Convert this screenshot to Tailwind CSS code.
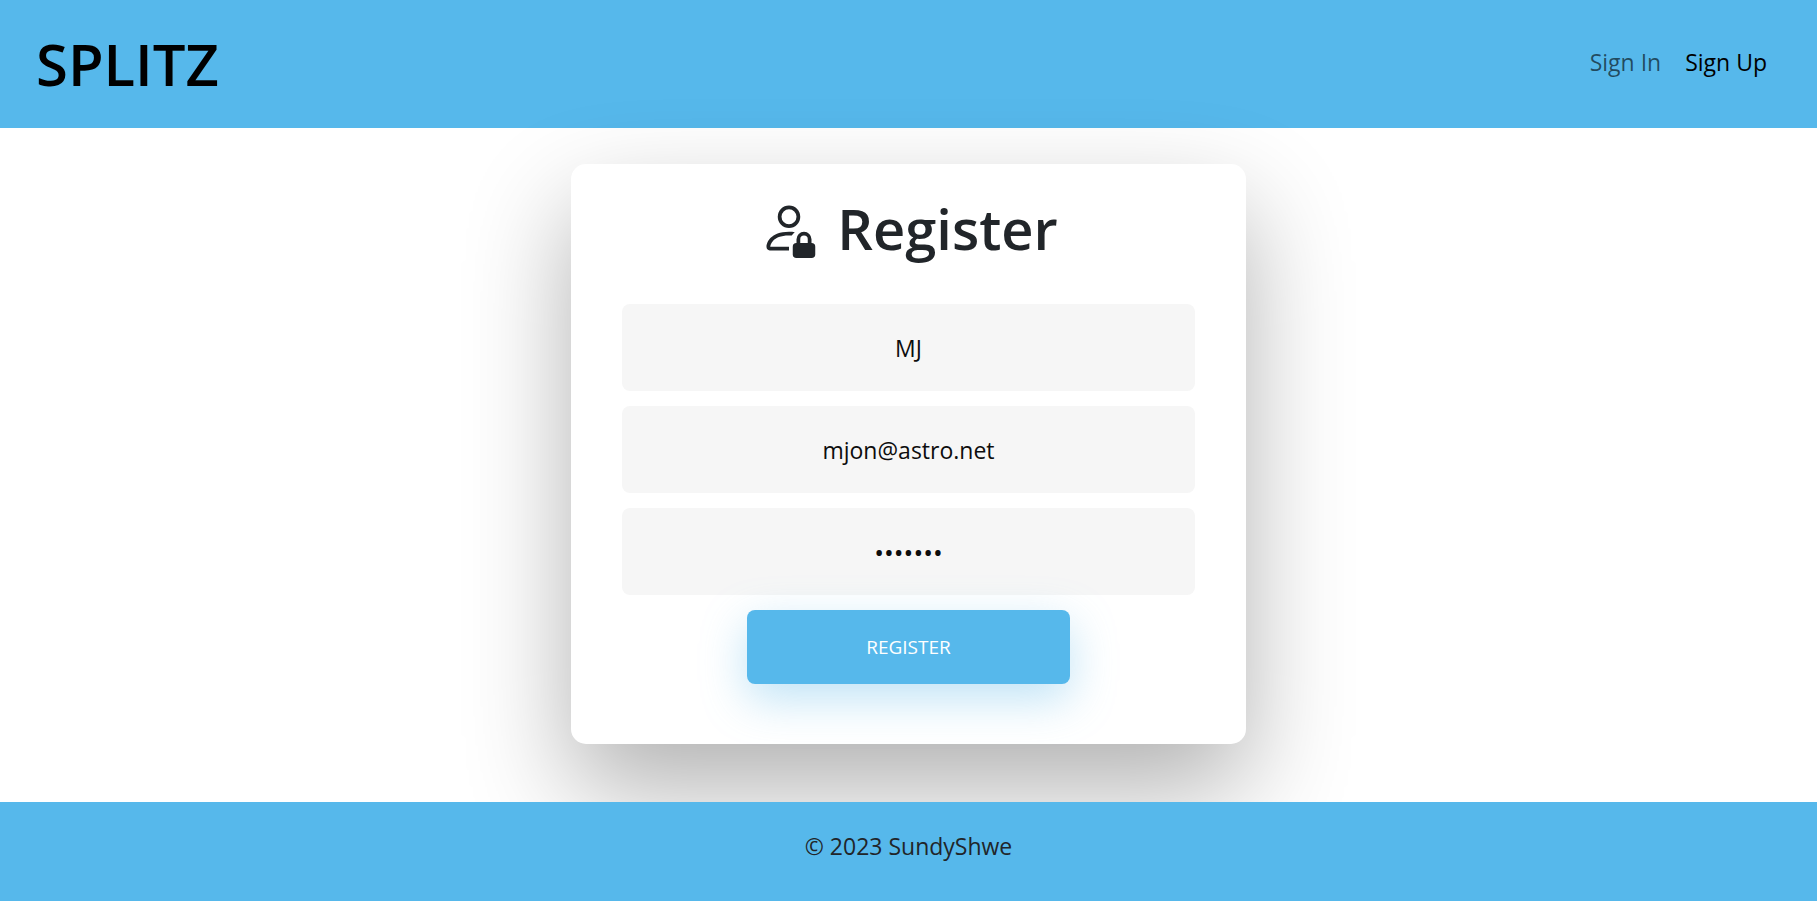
<!DOCTYPE html>
<html lang="en">
<head>
<meta charset="utf-8">
<meta name="viewport" content="width=device-width, initial-scale=1">
<title>Splitz - Register</title>
<script src="https://cdn.jsdelivr.net/npm/@tailwindcss/browser@4"></script>
</head>
<body class="flex min-h-screen flex-col bg-white font-['Open_Sans','Noto_Sans',sans-serif] text-[#212529]">
<header class="flex h-32 items-center justify-between bg-[#56b8eb] pr-[50px] pl-9">
  <a href="#" class="text-[58px] leading-[72px] font-semibold text-black">SPLITZ</a>
  <nav class="flex gap-6 pb-1 text-[23px] leading-9">
    <a href="#" class="text-black/60">Sign In</a>
    <a href="#" class="text-black">Sign Up</a>
  </nav>
</header>
<main class="flex grow justify-center px-4 pt-9 pb-[58px]">
  <form class="relative flex w-full max-w-[675px] flex-col items-center rounded-[15px] bg-white px-[51px] pt-7 shadow-[0_45px_105px_0_rgba(0,0,0,0.31)]">
    <h1 class="mb-10 flex items-center gap-[18px] text-[56px] leading-[72px] font-semibold">
      <svg class="size-[60px]" viewBox="0 0 16 16" fill="currentColor" aria-hidden="true"><path d="M11 5a3 3 0 1 1-6 0 3 3 0 0 1 6 0ZM8 7a2 2 0 1 0 0-4 2 2 0 0 0 0 4Zm0 5.996V14H3s-1 0-1-1 1-4 6-4c.564 0 1.077.038 1.544.107a4.524 4.524 0 0 0-.803.918A10.46 10.46 0 0 0 8 10c-2.29 0-3.516.68-4.168 1.332-.678.678-.83 1.418-.832 1.664h5ZM9 13a1 1 0 0 1 1-1v-1a2 2 0 1 1 4 0v1a1 1 0 0 1 1 1v2a1 1 0 0 1-1 1h-4a1 1 0 0 1-1-1v-2Zm3-3a1 1 0 0 0-1 1v1h2v-1a1 1 0 0 0-1-1Z"/></svg>
      Register
    </h1>
    <div class="flex w-full flex-col gap-[15px]">
      <input type="text" aria-label="Name" value="MJ" class="h-[87px] w-full rounded-lg bg-[#f6f6f6] text-center text-[23px] text-[#0d0d0d]">
      <input type="email" aria-label="Email" value="mjon@astro.net" class="h-[87px] w-full rounded-lg bg-[#f6f6f6] text-center text-[23px] text-[#0d0d0d]">
      <input type="password" aria-label="Password" value="secret1" class="h-[87px] w-full rounded-lg bg-[#f6f6f6] text-center text-[26px] text-[#0d0d0d]">
    </div>
    <button type="submit" class="mt-[15px] h-[74px] w-[323px] rounded-lg bg-[#56b8eb] text-[19px] text-white uppercase shadow-[0_15px_45px_0_rgba(95,186,233,0.4)]">Register</button>
  </form>
</main>
<footer class="relative h-[99px] bg-[#56b8eb] pt-[26px] text-center text-[23px] leading-9">© 2023 SundyShwe</footer>
</body>
</html>
